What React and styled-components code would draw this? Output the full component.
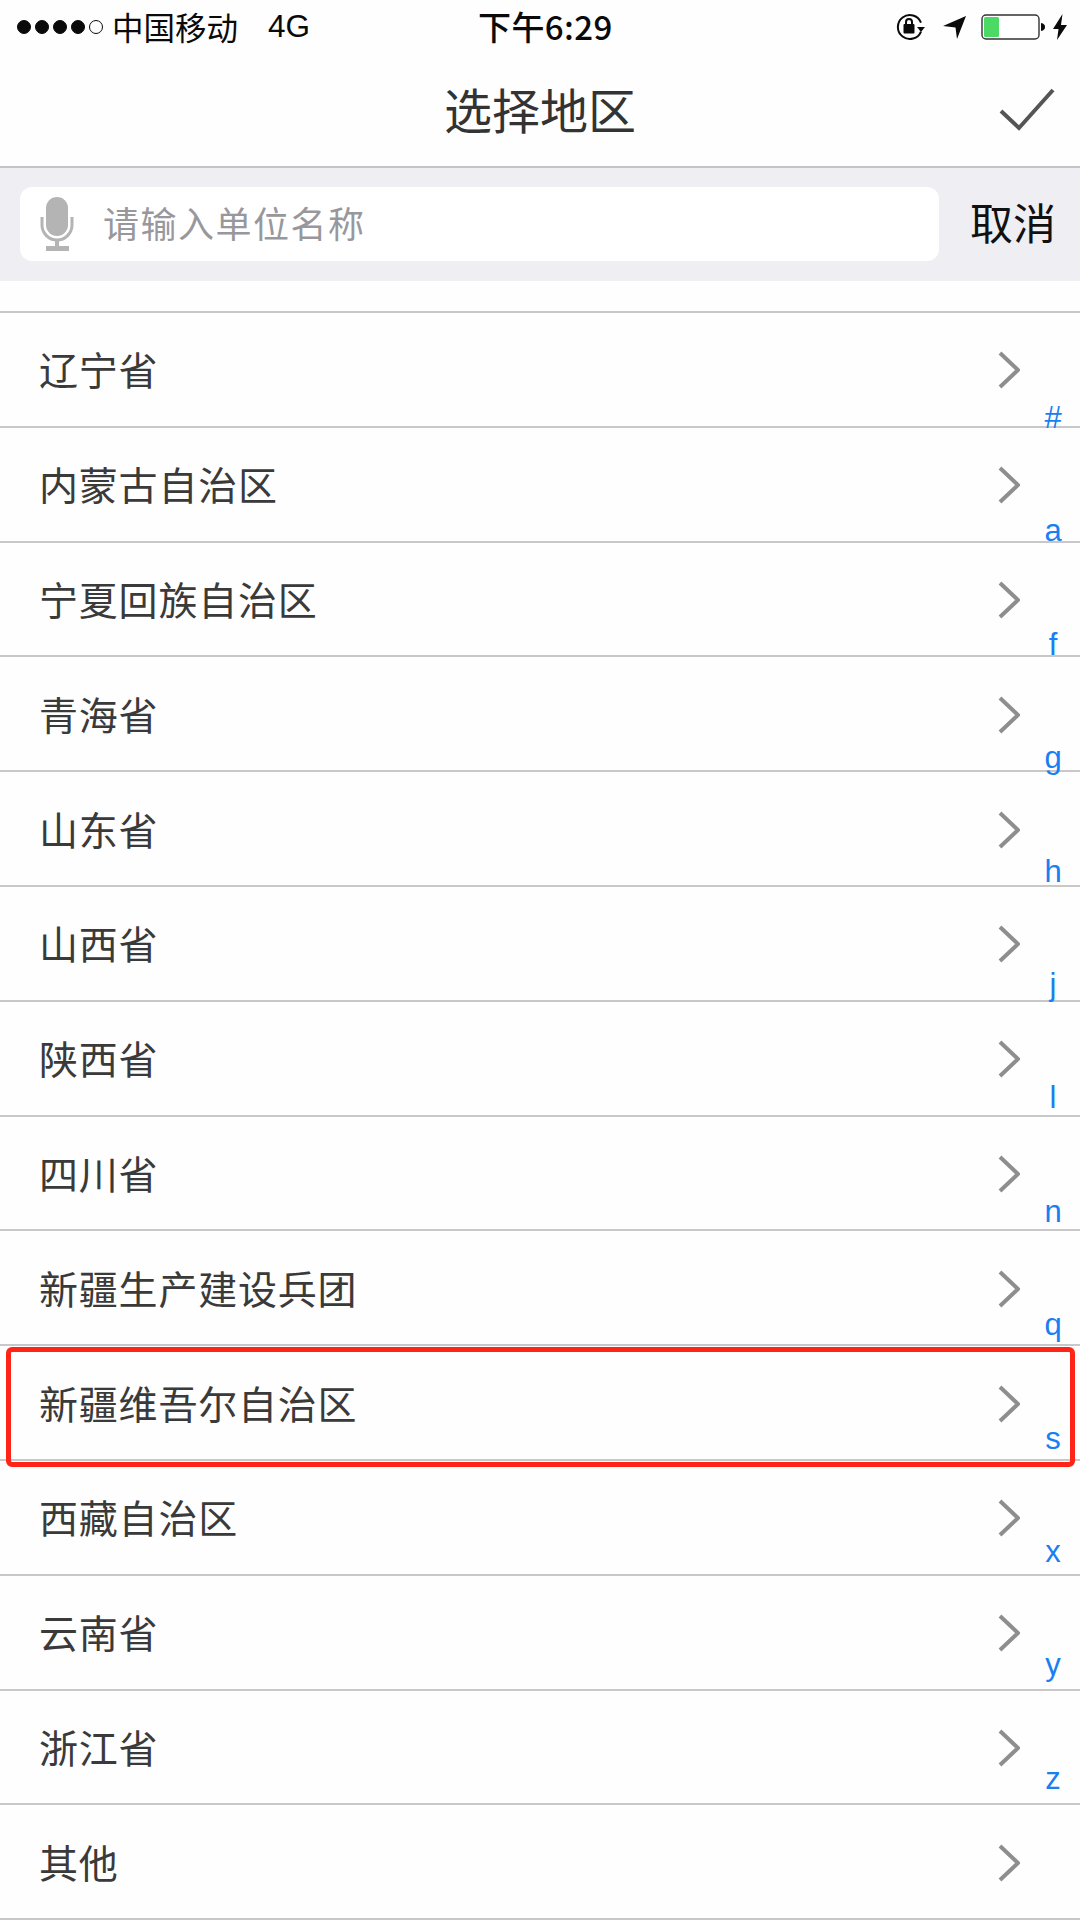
import styled, { createGlobalStyle } from 'styled-components';

const GlobalStyle = createGlobalStyle`
  html, body {
    margin: 0;
    padding: 0;
    background: #fff;
  }
  * {
    box-sizing: border-box;
  }
`;

const Screen = styled.div`
  position: relative;
  width: 1080px;
  height: 1920px;
  overflow: hidden;
  background: #fefefe;
  font-family: 'Noto Sans CJK SC', 'Liberation Sans', sans-serif;
`;

const StatusBar = styled.div`
  position: relative;
  height: 55px;
  padding: 0 13px 2px 17px;
  display: flex;
  align-items: center;
  justify-content: space-between;
  color: #0a0a0a;
`;

const Carrier = styled.div`
  display: flex;
  align-items: center;
  font-size: 31.500px;
  line-height: 53px;
`;

const Signal = styled.div`
  display: flex;
  gap: 4px;
  margin-right: 9px;
`;

const Dot = styled.span`
  width: 14px;
  height: 14px;
  border-radius: 50%;
  background: ${(props) => (props.empty ? 'transparent' : '#0a0a0a')};
  border: 1px solid #0a0a0a;
`;

const Network = styled.span`
  margin-left: 30px;
  font-family: 'Liberation Sans', sans-serif;
`;

const Clock = styled.div`
  position: absolute;
  left: 478px;
  top: 0;
  font-size: 33px;
  line-height: 53px;
  font-weight: 500;
  letter-spacing: 0.4px;
`;

const StatusIcons = styled.div`
  display: flex;
  align-items: center;
`;

const LockIcon = styled.svg`
  margin-right: 16px;
`;

const ArrowIcon = styled.svg`
  margin-right: 14px;
`;

const BatteryIcon = styled.svg`
  margin-right: 6px;
`;

const NavBar = styled.div`
  height: 113px;
  display: flex;
  align-items: center;
  justify-content: center;
  position: relative;
  border-bottom: 2px solid #c4c4c6;
`;

const Title = styled.h1`
  margin: 0 0 6px;
  font-size: 48px;
  font-weight: 400;
  color: #333;
`;

const Confirm = styled.div`
  position: absolute;
  right: 24px;
  top: 32px;
  display: flex;
`;

const SearchBar = styled.div`
  height: 113px;
  padding: 19px 24px 20px 20px;
  display: flex;
  align-items: center;
  justify-content: space-between;
  background: #eeeef3;
`;

const SearchField = styled.div`
  width: 919px;
  height: 74px;
  padding-left: 20px;
  display: flex;
  align-items: center;
  gap: 29px;
  border-radius: 12px;
  background: #fff;
`;

const Placeholder = styled.span`
  margin-bottom: 5px;
  font-size: 36px;
  letter-spacing: 1.5px;
  color: #98989c;
`;

const Cancel = styled.span`
  margin-bottom: 6px;
  font-size: 43px;
  color: #111;
`;

const List = styled.div`
  margin-top: 30px;
  border-top: 2px solid #c8c8ca;
`;

const Row = styled.div`
  height: 114.8px;
  padding: 0 60px 2px 39px;
  display: flex;
  align-items: center;
  justify-content: space-between;
  border-bottom: 2px solid #c8c8ca;
  font-size: 39px;
  letter-spacing: 0.8px;
  color: #3a3a3a;
`;

const ChevronIcon = styled.svg`
  margin-top: 4px;
`;

const IndexBar = styled.div`
  position: absolute;
  right: 0;
  top: 388px;
  width: 52px;
  display: flex;
  flex-direction: column;
  align-items: center;
`;

const IndexLetter = styled.div`
  height: 113.4px;
  padding-right: 2px;
  line-height: 60px;
  text-align: center;
  font-family: 'Liberation Sans', sans-serif;
  font-size: 31px;
  color: #1a7ff0;
`;

const Highlight = styled.div`
  position: absolute;
  left: 6px;
  top: 1347px;
  width: 1069px;
  height: 120px;
  border: 5px solid #ff2418;
  border-radius: 6px;
  pointer-events: none;
`;

function RotationLock() {
  return (
    <LockIcon width="32" height="30" viewBox="0 0 32 30">
      <path d="M26 10.5A12 12 0 1 0 26 19.5" fill="none" stroke="#0a0a0a" strokeWidth="2" />
      <path d="M22 15h8l-4 5z" fill="#0a0a0a" />
      <rect x="8.5" y="12" width="11" height="9.5" rx="1" fill="#0a0a0a" />
      <path d="M11 12.5V10a3 3 0 0 1 6 0v2.5" fill="none" stroke="#0a0a0a" strokeWidth="2" />
    </LockIcon>
  );
}

function LocationArrow() {
  return (
    <ArrowIcon width="24" height="24" viewBox="0 0 24 24">
      <path d="M0 11L23 1L14 24L12.5 12.5z" fill="#0a0a0a" />
    </ArrowIcon>
  );
}

function Battery() {
  return (
    <BatteryIcon width="66" height="28" viewBox="0 0 66 28">
      <rect x="1" y="2" width="57" height="24" rx="4" fill="#fff" stroke="#333" strokeWidth="1.4" />
      <rect x="3" y="4" width="15" height="20" rx="1.5" fill="#4cd964" />
      <path d="M60 10c3 .5 4 2 4 4s-1 3.500-4 4z" fill="#0a0a0a" />
    </BatteryIcon>
  );
}

function Bolt() {
  return (
    <svg width="14" height="26" viewBox="0 0 14 26">
      <path d="M9.500 0L0 15h5.500L4 26l10-15H8z" fill="#0a0a0a" />
    </svg>
  );
}

function CheckMark() {
  return (
    <svg width="58" height="44" viewBox="0 0 58 44">
      <path d="M3 24l18 17L55 3" fill="none" stroke="#555" strokeWidth="4" />
    </svg>
  );
}

function Mic() {
  return (
    <svg width="34" height="54" viewBox="0 0 34 54">
      <rect x="6" y="0" width="22" height="39" rx="11" fill="#b4b4b4" />
      <path d="M2 20v8a15 15 0 0 0 30 0v-8" fill="none" stroke="#b4b4b4" strokeWidth="3" />
      <rect x="15" y="42" width="4" height="9" fill="#b4b4b4" />
      <rect x="6" y="49" width="23" height="5" fill="#b4b4b4" />
    </svg>
  );
}

function Chevron() {
  return (
    <ChevronIcon width="22" height="38" viewBox="0 0 22 38">
      <path d="M2 2l18 17L2 36" fill="none" stroke="#8e8e8e" strokeWidth="4" />
    </ChevronIcon>
  );
}

const regions = [
  '辽宁省',
  '内蒙古自治区',
  '宁夏回族自治区',
  '青海省',
  '山东省',
  '山西省',
  '陕西省',
  '四川省',
  '新疆生产建设兵团',
  '新疆维吾尔自治区',
  '西藏自治区',
  '云南省',
  '浙江省',
  '其他',
];

const letters = ['#', 'a', 'f', 'g', 'h', 'j', 'l', 'n', 'q', 's', 'x', 'y', 'z'];

export default function App() {
  return (
    <Screen>
      <GlobalStyle />
      <StatusBar>
        <Carrier>
          <Signal>
            <Dot />
            <Dot />
            <Dot />
            <Dot />
            <Dot empty />
          </Signal>
          中国移动
          <Network>4G</Network>
        </Carrier>
        <Clock>下午6:29</Clock>
        <StatusIcons>
          <RotationLock />
          <LocationArrow />
          <Battery />
          <Bolt />
        </StatusIcons>
      </StatusBar>
      <NavBar>
        <Title>选择地区</Title>
        <Confirm>
          <CheckMark />
        </Confirm>
      </NavBar>
      <SearchBar>
        <SearchField>
          <Mic />
          <Placeholder>请输入单位名称</Placeholder>
        </SearchField>
        <Cancel>取消</Cancel>
      </SearchBar>
      <List>
        {regions.map((name) => (
          <Row key={name}>
            {name}
            <Chevron />
          </Row>
        ))}
      </List>
      <IndexBar>
        {letters.map((letter) => (
          <IndexLetter key={letter}>{letter}</IndexLetter>
        ))}
      </IndexBar>
      <Highlight />
    </Screen>
  );
}
